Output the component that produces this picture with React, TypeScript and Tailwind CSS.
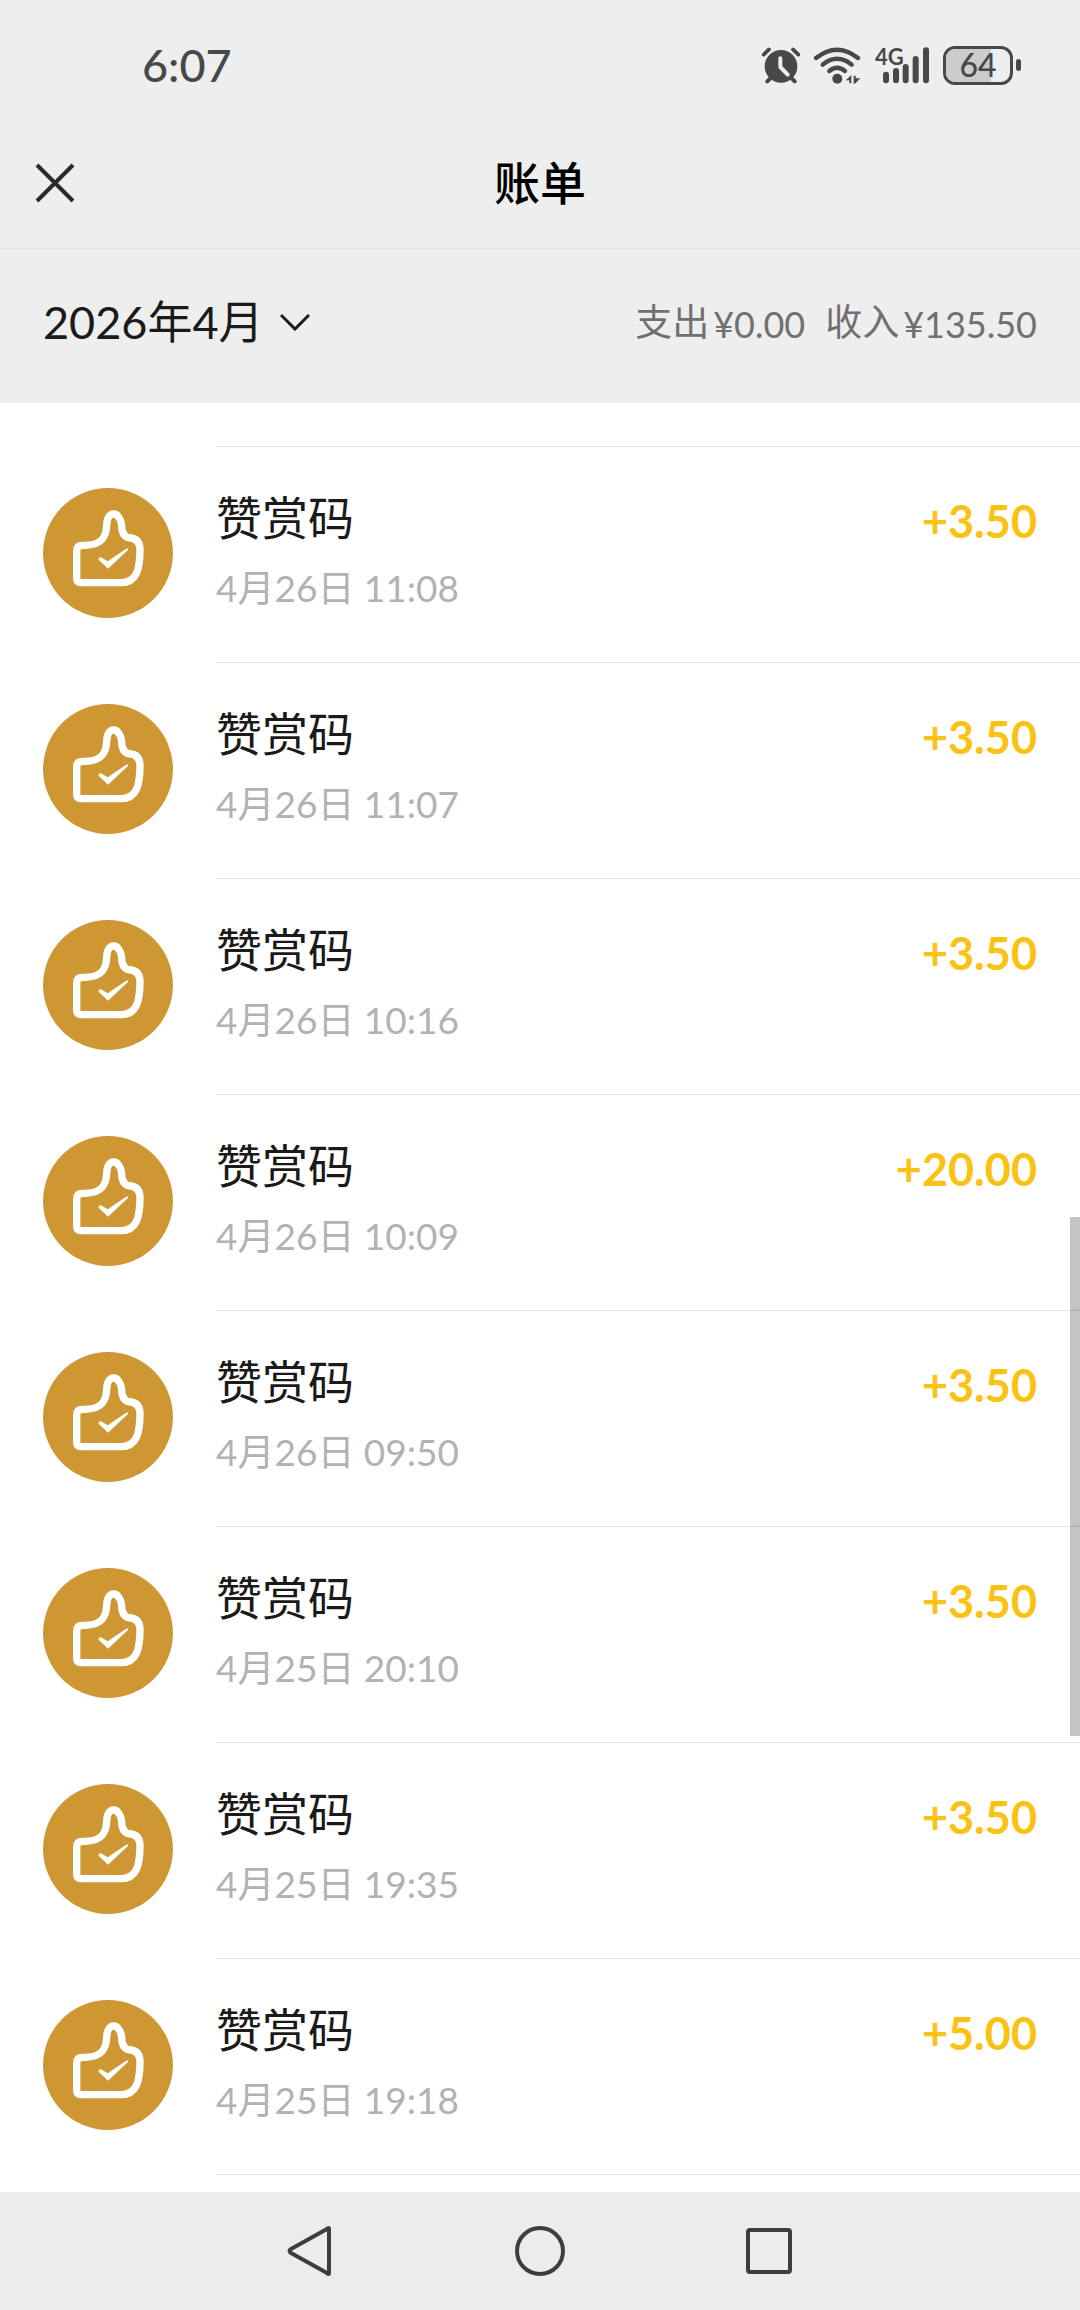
import React from "react"

interface Bill {
  title: string
  time: string
  amount: string
}

const bills: Bill[] = [
  { title: "赞赏码", time: "4月26日 11:08", amount: "+3.50" },
  { title: "赞赏码", time: "4月26日 11:07", amount: "+3.50" },
  { title: "赞赏码", time: "4月26日 10:16", amount: "+3.50" },
  { title: "赞赏码", time: "4月26日 10:09", amount: "+20.00" },
  { title: "赞赏码", time: "4月26日 09:50", amount: "+3.50" },
  { title: "赞赏码", time: "4月25日 20:10", amount: "+3.50" },
  { title: "赞赏码", time: "4月25日 19:35", amount: "+3.50" },
  { title: "赞赏码", time: "4月25日 19:18", amount: "+5.00" },
]

const AlarmIcon = () => (
  <svg viewBox="62 74 120 114" className="w-10 h-[38px]" fill="none" stroke="#484848" strokeLinecap="round">
    <circle cx="122" cy="135" r="49" fill="#484848" stroke="none" />
    <path d="M70 100 86 84M174 100 158 84" strokeWidth="11" />
    <path d="M81 180 92 169M163 180 152 169" strokeWidth="12" />
    <path d="M120 111V137L142 160" stroke="#eeeeee" strokeWidth="12" strokeLinejoin="round" />
  </svg>
)

const WifiIcon = () => (
  <svg viewBox="220 74 144 114" className="w-12 h-[38px]" fill="none" stroke="#484848" strokeWidth="13" strokeLinecap="round">
    <path d="M229 110Q292 60 355 110" />
    <path d="M249 130Q292 95 336 130" />
    <path d="M269 149Q292 130 316 149" />
    <circle cx="293" cy="172" r="15" fill="#484848" stroke="none" />
    <path d="M318 177 335 161V186H329V177ZM342 163H348V171H362L346 187H342Z" fill="#484848" stroke="none" />
  </svg>
)

const SignalIcon = () => (
  <div className="relative w-[54px] h-[38px]">
    <svg viewBox="405 74 162 114" className="w-full h-full" stroke="#484848" strokeWidth="18" strokeLinecap="round">
      <path d="M438 160V177M468 149V177M497 137V177M527 113V177M558 87V177" />
    </svg>
    <span className="absolute left-0 top-0 text-[22px] leading-[22px] font-bold">4G</span>
  </div>
)

const BatteryIcon = () => (
  <div className="flex items-center gap-[3px]">
    <div className="relative w-[70px] h-[39px] rounded-[12px] border-[3px] border-[#484848] overflow-hidden">
      <div className="h-full w-[70%] bg-[#cccccc]" />
      <span className="absolute inset-0 flex items-center justify-center text-[32px] leading-[32px] font-medium">64</span>
    </div>
    <div className="w-[5px] h-3 rounded-full bg-[#484848]" />
  </div>
)

const ThumbIcon = () => (
  <svg viewBox="39 23 390 390" className="w-[130px] h-[130px] shrink-0" fill="none">
    <circle cx="234" cy="218" r="195" fill="#cf9733" />
    <path
      d="M158 195C205 196 229 180 230 134C231 90 269 90 275 134C275 160 285 172 302 173C320 175 330 187 330 209C330 270 318 307 272 307H155Q140 307 140 292V212Q140 195 158 195Z"
      stroke="#fff"
      strokeWidth="22"
      strokeLinejoin="round"
    />
    <path d="M206 238Q205 231 213 231L233 243 291 204Q296 205 293 210L234 265Z" fill="#fff" />
  </svg>
)

const Total: React.FC<{ label: string; value: string }> = ({ label, value }) => (
  <div className="flex items-center gap-1">
    <span className="text-[37px] leading-[60px]">{label}</span>
    <span className="pt-1 text-[36px] leading-[60px]">{value}</span>
  </div>
)

const BillRow: React.FC<{ bill: Bill }> = ({ bill }) => (
  <li className="flex h-[216px] pl-[43px] gap-[43px]">
    <div className="pt-[42px]">
      <ThumbIcon />
    </div>
    <div className="flex flex-1 justify-between items-start pt-[41px] pr-[43px] border-t border-[#e3e3e3]">
      <div>
        <h2 className="text-[46px] leading-[60px] text-[#1a1a1a]">{bill.title}</h2>
        <p className="mt-4 text-[37px] leading-[48px] text-[#b2b2b2]">{bill.time}</p>
      </div>
      <span className="text-[45px] leading-[66px] font-bold text-[#fac213]">{bill.amount}</span>
    </div>
  </li>
)

const App = () => {
  return (
    <div className="min-h-screen flex flex-col bg-white font-['Lato','Noto_Sans_CJK_SC',sans-serif]">
      <header className="bg-[#eeeeee]">
        {/* Status bar */}
        <div className="flex items-center justify-between h-[118px] pt-3 pl-[142px] pr-[59px] text-[#484848]">
          <span className="text-[45px] leading-[60px] font-medium">6:07</span>
          <div className="flex items-center">
            <AlarmIcon />
            <span className="w-3" />
            <WifiIcon />
            <span className="w-[14px]" />
            <SignalIcon />
            <span className="w-[14px]" />
            <BatteryIcon />
          </div>
        </div>

        {/* Title bar */}
        <div className="grid grid-cols-3 items-center h-[131px] px-[35px] border-b border-[#e2e2e2]">
          <button aria-label="关闭" className="w-10 h-10">
            <svg viewBox="0 0 40 40" className="w-full h-full" stroke="#2a2a2a" strokeWidth="4">
              <path d="M2 2 38 38M38 2 2 38" />
            </svg>
          </button>
          <h1 className="text-center text-[46px] leading-[60px] font-medium text-black">账单</h1>
        </div>

        {/* Month and totals */}
        <div className="flex items-center justify-between h-[154px] pb-2 px-[43px]">
          <button className="flex items-center gap-4 text-[45px] leading-[60px] text-[#1a1a1a]">
            2026年4月
            <svg viewBox="0 0 30 18" className="w-[30px] h-[18px]" fill="none" stroke="#1a1a1a" strokeWidth="3">
              <path d="M1 2 15 16 29 2" />
            </svg>
          </button>
          <div className="flex gap-5 text-[#707070]">
            <Total label="支出" value="¥0.00" />
            <Total label="收入" value="¥135.50" />
          </div>
        </div>
      </header>

      <main className="relative flex-1 pt-[43px] pb-[17px]">
        <ul>
          {bills.map((bill) => (
            <BillRow key={bill.time} bill={bill} />
          ))}
        </ul>
        <div className="ml-[216px] border-t border-[#e3e3e3]" />
        {/* Scroll thumb */}
        <div className="absolute right-0 top-[814px] w-[10px] h-[519px] bg-black/23" />
      </main>

      <nav className="flex items-center justify-center gap-[180px] h-[118px] bg-[#ececec]">
        <button aria-label="返回">
          <svg viewBox="0 0 50 50" className="w-[50px] h-[50px]" fill="none" stroke="#3d3d3d" strokeWidth="4" strokeLinejoin="round">
            <path d="M44 3V47Q44 49 42 47L6 27Q3 25 6 23L42 3Q44 1 44 3Z" />
          </svg>
        </button>
        <button aria-label="主屏幕">
          <svg viewBox="0 0 50 50" className="w-[50px] h-[50px]" fill="none" stroke="#3d3d3d" strokeWidth="4">
            <circle cx="25" cy="25" r="23" />
          </svg>
        </button>
        <button aria-label="最近任务">
          <svg viewBox="0 0 50 50" className="w-[50px] h-[50px]" fill="none" stroke="#3d3d3d" strokeWidth="4">
            <rect x="3" y="4" width="42" height="42" rx="2" />
          </svg>
        </button>
      </nav>
    </div>
  )
}

export default App
